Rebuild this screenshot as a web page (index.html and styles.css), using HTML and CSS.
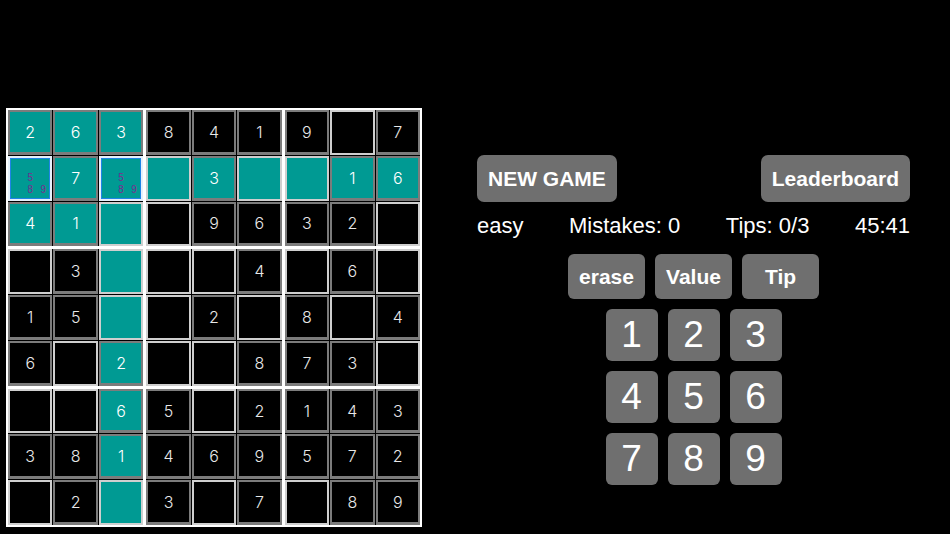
FILE: index.html
```html
<!DOCTYPE html>
<html>
<head>
<meta charset="utf-8">
<link rel="stylesheet" href="styles.css">
</head>
<body>
<div class="app">
  <div class="board">
    <div class="box">
      <div class="cell hl">2</div><div class="cell hl">6</div><div class="cell hl">3</div>
      <div class="cell hl empty sel"><div class="notes"><span></span><span></span><span></span><span></span><span>5</span><span></span><span></span><span>8</span><span>9</span></div></div><div class="cell hl">7</div><div class="cell hl empty sel"><div class="notes"><span></span><span></span><span></span><span></span><span>5</span><span></span><span></span><span>8</span><span>9</span></div></div>
      <div class="cell hl">4</div><div class="cell hl">1</div><div class="cell hl empty"></div>
    </div>
    <div class="box">
      <div class="cell">8</div><div class="cell">4</div><div class="cell">1</div>
      <div class="cell hl empty"></div><div class="cell hl">3</div><div class="cell hl empty"></div>
      <div class="cell empty"></div><div class="cell">9</div><div class="cell">6</div>
    </div>
    <div class="box">
      <div class="cell">9</div><div class="cell empty"></div><div class="cell">7</div>
      <div class="cell hl empty"></div><div class="cell hl">1</div><div class="cell hl">6</div>
      <div class="cell">3</div><div class="cell">2</div><div class="cell empty"></div>
    </div>
    <div class="box">
      <div class="cell empty"></div><div class="cell">3</div><div class="cell hl empty"></div>
      <div class="cell">1</div><div class="cell">5</div><div class="cell hl empty"></div>
      <div class="cell">6</div><div class="cell empty"></div><div class="cell hl">2</div>
    </div>
    <div class="box">
      <div class="cell empty"></div><div class="cell empty"></div><div class="cell">4</div>
      <div class="cell empty"></div><div class="cell">2</div><div class="cell empty"></div>
      <div class="cell empty"></div><div class="cell empty"></div><div class="cell">8</div>
    </div>
    <div class="box">
      <div class="cell empty"></div><div class="cell">6</div><div class="cell empty"></div>
      <div class="cell">8</div><div class="cell empty"></div><div class="cell">4</div>
      <div class="cell">7</div><div class="cell">3</div><div class="cell empty"></div>
    </div>
    <div class="box">
      <div class="cell empty"></div><div class="cell empty"></div><div class="cell hl">6</div>
      <div class="cell">3</div><div class="cell">8</div><div class="cell hl">1</div>
      <div class="cell empty"></div><div class="cell">2</div><div class="cell hl empty"></div>
    </div>
    <div class="box">
      <div class="cell">5</div><div class="cell empty"></div><div class="cell">2</div>
      <div class="cell">4</div><div class="cell">6</div><div class="cell">9</div>
      <div class="cell">3</div><div class="cell empty"></div><div class="cell">7</div>
    </div>
    <div class="box">
      <div class="cell">1</div><div class="cell">4</div><div class="cell">3</div>
      <div class="cell">5</div><div class="cell">7</div><div class="cell">2</div>
      <div class="cell empty"></div><div class="cell">8</div><div class="cell">9</div>
    </div>
  </div>

  <div class="panel">
    <div class="top-row">
      <button class="btn big">NEW GAME</button>
      <button class="btn big">Leaderboard</button>
    </div>
    <div class="info-row">
      <span>easy</span>
      <span>Mistakes: 0</span>
      <span>Tips: 0/3</span>
      <span>45:41</span>
    </div>
    <div class="action-row">
      <button class="btn act">erase</button>
      <button class="btn act">Value</button>
      <button class="btn act">Tip</button>
    </div>
    <div class="pad">
      <button class="btn num">1</button>
      <button class="btn num">2</button>
      <button class="btn num">3</button>
      <button class="btn num">4</button>
      <button class="btn num">5</button>
      <button class="btn num">6</button>
      <button class="btn num">7</button>
      <button class="btn num">8</button>
      <button class="btn num">9</button>
    </div>
  </div>
</div>
</body>
</html>
```

FILE: styles.css
```css
html, body {
  margin: 0;
  padding: 0;
  background: #000;
  width: 950px;
  height: 534px;
  overflow: hidden;
  font-family: "Liberation Sans", Arial, sans-serif;
  color: #fff;
}

.app {
  display: flex;
  align-items: flex-start;
  padding: 108px 0 0 6px;
}

.board {
  width: 416px;
  height: 419px;
  box-sizing: border-box;
  border: 2px solid #fff;
  background: #fff;
  display: grid;
  grid-template-columns: repeat(3, 1fr);
  grid-template-rows: repeat(3, 1fr);
  gap: 3px;
}

.box {
  background: #000;
  display: grid;
  grid-template-columns: repeat(3, 1fr);
  grid-template-rows: repeat(3, 1fr);
  gap: 1px;
}

.cell {
  box-sizing: border-box;
  border: 2px solid #7c7c7c;
  border-bottom-width: 3px;
  background: #000;
  color: #e8e8e8;
  font-family: "Inter", "DejaVu Sans", sans-serif;
  font-weight: 300;
  font-size: 16px;
  display: flex;
  align-items: center;
  justify-content: center;
  min-width: 0;
  min-height: 0;
}

.cell.hl {
  background: #009a93;
  color: #fff;
}

.cell.empty {
  border-color: #cfcfcf;
  border-bottom-width: 2px;
}

.cell.sel {
  border: 2px solid #e6f0fa;
  box-shadow: inset 0 0 0 1px #1f85e6;
}

.notes {
  display: grid;
  grid-template-columns: repeat(3, 13px);
  grid-template-rows: repeat(3, 12px);
  font-family: "Liberation Sans", Arial, sans-serif;
  font-size: 10px;
  font-weight: 400;
  color: #7a2d8f;
  text-align: center;
  line-height: 11px;
}

.notes span {
  display: block;
  overflow: hidden;
}

.panel {
  margin-left: 55px;
  margin-top: 47px;
  width: 433px;
  display: flex;
  flex-direction: column;
}

.btn {
  background: #6f6f6f;
  color: #fff;
  border: none;
  font-family: "Liberation Sans", Arial, sans-serif;
  margin: 0;
  padding: 0;
  cursor: pointer;
}

.top-row {
  display: flex;
  justify-content: space-between;
}

.btn.big {
  height: 47px;
  padding: 0 11px;
  border-radius: 7px;
  font-size: 21px;
  font-weight: bold;
}

.info-row {
  display: flex;
  justify-content: space-between;
  margin-top: 11px;
  font-size: 22px;
  line-height: 26px;
}

.action-row {
  display: flex;
  justify-content: center;
  gap: 10px;
  margin-top: 15px;
}

.btn.act {
  width: 77px;
  height: 45px;
  border-radius: 6px;
  font-size: 21px;
  font-weight: bold;
}

.pad {
  display: grid;
  grid-template-columns: repeat(3, 52px);
  grid-auto-rows: 52px;
  gap: 10px;
  justify-content: center;
  margin-top: 10px;
}

.btn.num {
  border-radius: 6px;
  font-size: 37px;
  font-weight: normal;
}
```
